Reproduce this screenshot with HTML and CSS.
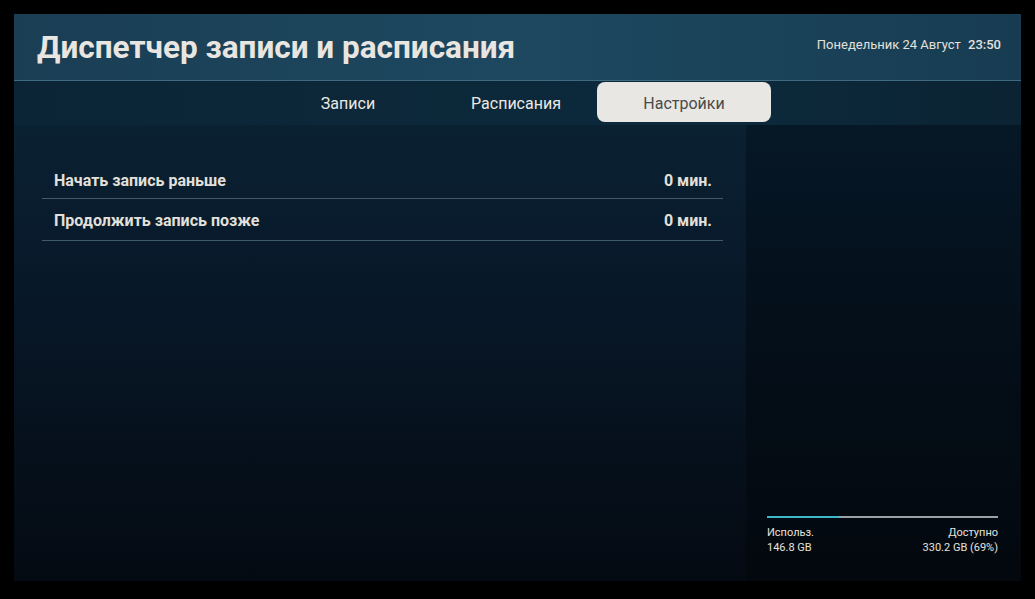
FILE: index.html
```html
<!DOCTYPE html>
<html lang="ru">
<head>
    <meta charset="UTF-8" />
    <title>Диспетчер записи и расписания</title>
    <link rel="stylesheet" href="styles.css">
</head>
<body>
    <div class="screen">
        <header class="top">
            <h1>Диспетчер записи и расписания</h1>
            <p class="clock">Понедельник 24 Август <strong>23:50</strong></p>
        </header>
        <nav class="tabs">
            <a class="tab">Записи</a>
            <a class="tab">Расписания</a>
            <a class="tab active">Настройки</a>
        </nav>
        <div class="body">
            <main class="settings">
                <div class="row">
                    <span>Начать запись раньше</span>
                    <span class="value">0 мин.</span>
                </div>
                <div class="row">
                    <span>Продолжить запись позже</span>
                    <span class="value">0 мин.</span>
                </div>
            </main>
            <aside class="side">
                <div class="storage">
                    <div class="bar"><div class="bar-used" style="width:31%"></div></div>
                    <div class="storage-info">
                        <div>Использ.<br>146.8 GB</div>
                        <div class="free">Доступно<br>330.2 GB (69%)</div>
                    </div>
                </div>
            </aside>
        </div>
    </div>
</body>
</html>
```
FILE: styles.css
```css
body {
    margin: 0; padding: 0;
    background: #000;
    font-family: 'Roboto', sans-serif;
    color: #e6e3de;
}
.screen {
    width: 1007px; height: 567px;
    margin: 14px 0 0 14px;
    display: flex; flex-direction: column;
    background: linear-gradient(180deg, #0c2839 0%, #08192a 45%, #040a12 100%);
    overflow: hidden;
}
.top {
    height: 66px;
    display: flex; justify-content: space-between; align-items: center;
    padding: 0 20px 0 24px;
    background: linear-gradient(90deg, #1a3e54 0%, #1d4860 50%, #173c52 100%);
    border-bottom: 1px solid #3f6a80;
}
.top h1 {
    margin: 0 0 0 -1px;
    font-size: 31.5px; font-weight: 700;
    color: #e9e6e1;
}
.clock {
    margin: 0 0 6px;
    font-size: 13px;
    color: #e4e1dc;
}
.clock strong {
    margin-left: 4px; font-weight: 500;
}
.tabs {
    height: 44px;
    box-sizing: border-box;
    display: flex;
    padding: 1px 0 0 250px;
    background: linear-gradient(90deg, #0b2536, #0c2a3c 70%, #0b2333);
}
.tab {
    width: 168px; height: 40px;
    display: flex; align-items: center; justify-content: center;
    padding-top: 2px; box-sizing: border-box;
    font-size: 16px;
    color: #ece9e4;
}
.tab.active {
    width: 174px;
    margin-left: -3px;
    background: #e9e7e4;
    color: #4a4a4a;
    border-radius: 8px;
}
.body {
    flex: 1;
    display: flex;
}
.settings {
    flex: 1;
    padding: 35px 23px 0 28px;
}
.row {
    height: 42px;
    display: flex; justify-content: space-between; align-items: center;
    padding: 2px 11px 0 12px;
    box-sizing: border-box;
    border-bottom: 1px solid #3f5b6b;
    font-size: 16px; font-weight: 700;
    color: #e3e0db;
}
.row:first-child {
    height: 39px;
}
.side {
    width: 275px;
    display: flex; flex-direction: column; justify-content: flex-end;
    background: linear-gradient(180deg, #061726 0%, #040e18 50%, #03080e 100%);
}
.storage {
    padding: 0 23px 26px 21px;
}
.bar {
    height: 2px;
    background: #9aa3a8;
}
.bar-used {
    height: 2px;
    background: #3cb8c9;
}
.storage-info {
    display: flex; justify-content: space-between;
    margin-top: 7px;
    font-size: 11px; line-height: 15px;
    color: #e6e3de;
}
.free {
    text-align: right;
}
```
